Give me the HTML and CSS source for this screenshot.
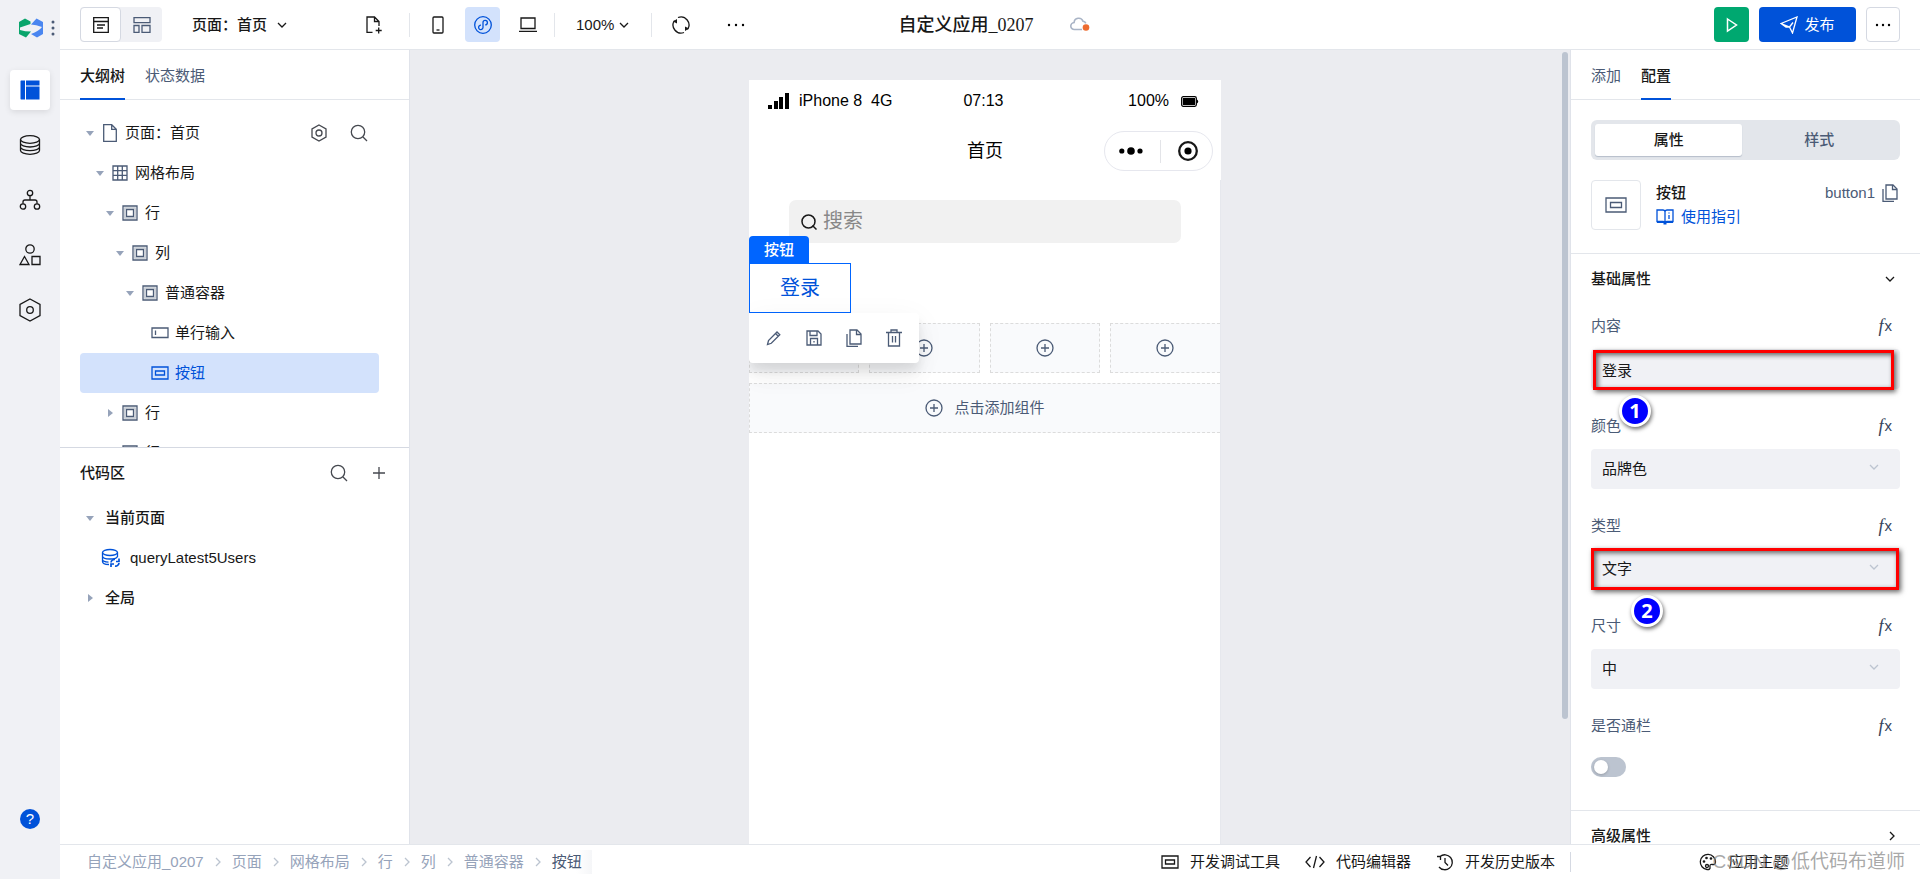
FILE: index.html
```html
<!DOCTYPE html>
<html lang="zh-CN">
<head>
<meta charset="utf-8">
<title>自定义应用_0207</title>
<link rel="stylesheet" href="styles.css">
</head>
<body>
<svg class="sprite" aria-hidden="true">
  <symbol id="i-box" viewBox="0 0 16 16"><path d="M1 1h14v14H1z"/><path d="M4.500 4.500h7v7h-7z"/><path stroke-opacity=".35" d="M2.800 2.800h10.400v10.400H2.800z"/></symbol>
  <symbol id="i-button" viewBox="0 0 18 14"><path d="M1 1h16v12H1z"/><path d="M4.500 5h9v4h-9z"/></symbol>
  <symbol id="i-plus-circle" viewBox="0 0 18 18"><circle cx="9" cy="9" r="8"/><path d="M9 5v8M5 9h8"/></symbol>
  <symbol id="i-search" viewBox="0 0 18 18"><circle cx="8" cy="8" r="6.700"/><path d="M13 13l4 4"/></symbol>
  <symbol id="i-copy" viewBox="0 0 18 18"><path d="M5 1h7l4 4v10H5z"/><path d="M11.500 1v4.500H16"/><path d="M2 5v12.500h11"/></symbol>
  <symbol id="i-down" viewBox="0 0 10 6"><path d="M1 1l4 4 4-4"/></symbol>
  <symbol id="i-right" viewBox="0 0 6 10"><path d="M1 1l4 4-4 4"/></symbol>
</svg>
<div class="app">
  <nav class="rail">
    <div class="rail-logo">
      <svg width="24" height="20" viewBox="0 0 24 20"><path fill="#0aa56c" d="M0 4L6 .5 11.500 3.500V6L1 9.500V12q5 1.500 11 1.500L7 19.500 0 16z"/><path fill="#4a86f0" d="M24 16L18 19.500 12 16q8-3 11-7-6-2.500-11-2.500L17.500 .5 24 4z"/></svg>
      <svg width="4" height="18" viewBox="0 0 4 18" fill="#4b5b76"><circle cx="2" cy="3" r="1.500"/><circle cx="2" cy="9" r="1.500"/><circle cx="2" cy="15" r="1.500"/></svg>
    </div>
    <button class="rail-item is-active" aria-label="编辑器"><svg width="20" height="20" viewBox="0 0 20 20"><path fill="#0052d9" d="M1 .5h4v19H1a1 1 0 0 1-.5-.5V1zM6 .5H19.500v5H6zM6 6.500H19.500v13H6z"/></svg></button>
    <button class="rail-item" aria-label="数据"><svg class="ico" width="22" height="22" viewBox="0 0 22 22"><ellipse cx="11" cy="5.500" rx="9.500" ry="3.800"/><path d="M1.500 5.500v11c0 2.200 4.300 3.800 9.500 3.800s9.500-1.600 9.500-3.800v-11M1.500 9.200c0 2.200 4.300 3.800 9.500 3.800s9.500-1.600 9.500-3.800M1.500 12.900c0 2.200 4.300 3.800 9.500 3.800s9.500-1.600 9.500-3.800"/></svg></button>
    <button class="rail-item" aria-label="流程"><svg class="ico" width="22" height="22" viewBox="0 0 22 22"><circle cx="11" cy="4" r="2.700"/><circle cx="4" cy="17.500" r="2.700"/><circle cx="18" cy="17.500" r="2.700"/><path d="M11 6.700V11M4 14.800V13q0-2 2-2h10q2 0 2 2v1.800"/></svg></button>
    <button class="rail-item" aria-label="组件"><svg class="ico" width="22" height="22" viewBox="0 0 22 22"><circle cx="11" cy="5" r="4.200"/><path d="M5.500 12.500L10 20.500H1zM13 12.500h8v8h-8z"/></svg></button>
    <button class="rail-item" aria-label="设置"><svg class="ico" width="22" height="24" viewBox="0 0 22 24"><path d="M11 1l10 5.500v11L11 23 1 17.500v-11z"/><circle cx="11" cy="12" r="3.300"/></svg></button>
    <button class="rail-help" aria-label="帮助">?</button>
  </nav>

  <div class="workspace">
    <header class="topbar">
      <div class="top-left">
        <div class="view-switch">
          <button class="view-btn is-active" aria-label="大纲视图"><svg class="ico" width="16" height="16" viewBox="0 0 16 16"><path d="M.7 .7h14.600v14.600H.7zM.7 4.500h14.600M4 8h8M4 11h6"/></svg></button>
          <button class="view-btn" aria-label="布局视图"><svg class="ico slate" width="18" height="16" viewBox="0 0 18 16"><path d="M1 .7h16v5H1zM1 8.500h5v6.800H1zM9 8.500h8v6.800H9z"/></svg></button>
        </div>
        <button class="page-select">页面：首页 <svg class="ico" width="10" height="6"><use href="#i-down"/></svg></button>
        <button class="tool tool-new" aria-label="新建页面"><svg class="ico" width="18" height="18" viewBox="0 0 18 18"><path d="M7.500 16.300H2V1h7.500L14 5.500V10M9.500 1v4.500H14M13.700 11.500v6M10.700 14.500h6"/></svg></button>
        <span class="divider"></span>
        <div class="devices">
          <button class="tool" aria-label="手机"><svg class="ico" width="12" height="18" viewBox="0 0 12 18"><rect x="1" y="1" width="10" height="16" rx="1"/><path d="M4.500 14h3"/></svg></button>
          <button class="tool is-active" aria-label="小程序"><svg class="ico blue" width="18" height="18" viewBox="0 0 18 18"><circle cx="9" cy="9" r="8.300"/><path d="M7 9.200a2.200 2.200 0 1 0 2 2.300v-5a2.200 2.200 0 1 1 2.200 2.300"/></svg></button>
          <button class="tool" aria-label="电脑"><svg class="ico" width="18" height="16" viewBox="0 0 18 16"><path d="M2 1h14v10.500H2zM0 14.300h18"/></svg></button>
        </div>
        <span class="divider"></span>
        <button class="zoom">100% <svg class="ico" width="10" height="6"><use href="#i-down"/></svg></button>
        <span class="divider"></span>
        <div class="actions">
          <button class="tool" aria-label="刷新"><svg class="ico" width="18" height="18" viewBox="0 0 18 18"><path d="M6 1.500a8 8 0 0 1 9.500 12M12 16.500A8 8 0 0 1 2.500 4.500"/><path fill="#181818" stroke="none" d="M1 5.500L5 3v4.500zM17 12.500l-4 2.500v-4.500z"/></svg></button>
          <button class="tool" aria-label="更多"><svg width="18" height="4" viewBox="0 0 18 4"><circle cx="2" cy="2" r="1.200"/><circle cx="9" cy="2" r="1.200"/><circle cx="16" cy="2" r="1.200"/></svg></button>
        </div>
      </div>
      <div class="top-title">
        <h1>自定义应用_0207</h1>
        <svg width="20" height="15" viewBox="0 0 20 15"><path fill="none" stroke="#a9b4c6" stroke-width="1.600" d="M12 12.500H4.500a3.500 3.500 0 0 1-.4-7A4.600 4.600 0 0 1 13 4.200a3.400 3.400 0 0 1 2.800 2.200"/><circle cx="16" cy="10.500" r="3.300" fill="#ed6b2f"/></svg>
      </div>
      <div class="top-right">
        <button class="run" aria-label="预览"><svg width="12" height="16" viewBox="0 0 12 16" fill="none" stroke="#fff" stroke-width="1.500"><path d="M1.500 2l9 6-9 6z"/></svg></button>
        <button class="publish"><svg width="18" height="18" viewBox="0 0 18 18" fill="none" stroke="#fff" stroke-width="1.300"><path d="M1 7.500L17 1l-4.500 16-3-6zM9.500 11L13 6.500M1 7.500L6 11l3.500 0"/></svg>发布</button>
        <button class="more" aria-label="更多"><svg width="18" height="4" viewBox="0 0 18 4"><circle cx="3" cy="2" r="1.200"/><circle cx="9" cy="2" r="1.200"/><circle cx="15" cy="2" r="1.200"/></svg></button>
      </div>
    </header>

    <main class="middle">
      <aside class="outline">
        <div class="tabs"><button class="tab is-active">大纲树</button><button class="tab">状态数据</button></div>
        <ul class="tree">
          <li class="row"><i class="caret"></i><span class="row-icon"><svg class="ico slate" width="14" height="18" viewBox="0 0 14 18"><path d="M.7 .7h8l4.600 4.600v12H.7zM8.700 .7v4.600h4.600"/></svg></span>页面：首页
            <span class="row-tools">
              <button class="icon-btn" aria-label="页面设置"><svg class="ico gray" width="16" height="18" viewBox="0 0 16 18"><path d="M8 1l7 4v8l-7 4-7-4V5z"/><circle cx="8" cy="9" r="3"/></svg></button>
              <button class="icon-btn" aria-label="搜索"><svg class="ico gray" width="18" height="18"><use href="#i-search"/></svg></button>
            </span></li>
          <li class="row level-1"><i class="caret"></i><span class="row-icon"><svg class="ico slate" width="16" height="16" viewBox="0 0 16 16"><path d="M1 1h14v14H1zM5.700 1v14M10.300 1v14M1 5.700h14M1 10.300h14"/></svg></span>网格布局</li>
          <li class="row level-2"><i class="caret"></i><span class="row-icon"><svg class="ico slate" width="16" height="16"><use href="#i-box"/></svg></span>行</li>
          <li class="row level-3"><i class="caret"></i><span class="row-icon"><svg class="ico slate" width="16" height="16"><use href="#i-box"/></svg></span>列</li>
          <li class="row level-4"><i class="caret"></i><span class="row-icon"><svg class="ico slate" width="16" height="16"><use href="#i-box"/></svg></span>普通容器</li>
          <li class="row level-5"><i class="caret is-empty"></i><span class="row-icon"><svg class="ico slate" width="18" height="12" viewBox="0 0 18 12"><path d="M1 1h16v9.500H1zM4.500 3.500v4.500"/></svg></span>单行输入</li>
          <li class="row level-5 is-selected"><i class="caret is-empty"></i><span class="row-icon"><svg class="ico blue" width="18" height="14"><use href="#i-button"/></svg></span>按钮</li>
          <li class="row level-2"><i class="caret is-closed"></i><span class="row-icon"><svg class="ico slate" width="16" height="16"><use href="#i-box"/></svg></span>行</li>
          <li class="row level-2"><i class="caret is-closed"></i><span class="row-icon"><svg class="ico slate" width="16" height="16"><use href="#i-box"/></svg></span>行</li>
        </ul>
        <section class="code">
          <div class="code-head"><h2>代码区</h2>
            <span class="code-tools">
            <button class="icon-btn" aria-label="搜索"><svg class="ico gray" width="18" height="18"><use href="#i-search"/></svg></button>
            <button class="icon-btn" aria-label="新增"><svg class="ico gray" width="12" height="12" viewBox="0 0 12 12"><path d="M6 0v12M0 6h12"/></svg></button>
            </span>
          </div>
          <ul class="code-list">
            <li class="row strong"><i class="caret"></i>当前页面</li>
            <li class="row query"><svg class="ico blue" width="20" height="20" viewBox="0 0 20 20"><ellipse cx="9" cy="4.500" rx="7.500" ry="3"/><path d="M1.500 4.500v9c0 1.800 3 3 6.500 3M16.500 4.500V9M1.500 8c0 1.800 3.400 3 7.500 3s7.500-1.200 7.500-3M1.500 11.500c0 1.500 3 2.500 6 2.700"/><path stroke-width="1.700" d="M10 14.500a3.500 3.500 0 0 1 4-3M18 15a3.500 3.500 0 0 1-4 3M18 10.500v3h-3M10 19v-3h3"/></svg>queryLatest5Users</li>
            <li class="row strong"><i class="caret is-closed"></i>全局</li>
          </ul>
        </section>
      </aside>

      <section class="canvas">
        <div class="phone">
          <div class="status">
            <span class="carrier"><svg width="22" height="16" viewBox="0 0 22 16"><path d="M0 12h4v4H0zM6 8h4v8H6zM11 4h4v12h-4zM17 0h4v16h-4z"/></svg>iPhone 8&nbsp; 4G</span>
            <span>07:13</span>
            <span class="power">100% <svg width="18" height="11" viewBox="0 0 18 11"><rect x=".7" y=".7" width="14.600" height="9.600" rx="1.500" fill="none" stroke="#000" stroke-width="1.300"/><path d="M2 2h12v7H2zM16 3.500q2.500 2 0 4z"/></svg></span>
          </div>
          <div class="navbar">
            <span class="nav-title">首页</span>
            <span class="capsule"><svg width="24" height="8" viewBox="0 0 24 8"><circle cx="2.800" cy="4" r="2.600"/><circle cx="12" cy="4" r="3.800"/><circle cx="21" cy="4" r="2.600"/></svg><span class="capsule-line"></span><svg width="20" height="20" viewBox="0 0 20 20"><circle cx="10" cy="10" r="8.800" fill="none" stroke="#181818" stroke-width="2.300"/><circle cx="10" cy="10" r="3.600"/></svg></span>
          </div>
          <div class="page">
            <label class="search"><svg width="16" height="16" viewBox="0 0 16 16" fill="none" stroke="#181818" stroke-width="1.500"><circle cx="7.500" cy="7.500" r="6.500"/><path d="M11.500 11.500l4 4"/></svg><input type="text" placeholder="搜索" aria-label="搜索"></label>
            <div class="selection">
              <span class="tag">按钮</span>
              <button class="login">登录</button>
              <div class="float-bar">
                <button class="icon-btn" aria-label="编辑"><svg class="ico slate" width="16" height="16" viewBox="0 0 16 16"><path d="M1.500 14.500l1-4L11 2l2.800 2.800-8.500 8.500zM9.500 3.500l2.800 2.800"/></svg></button>
                <button class="icon-btn" aria-label="保存"><svg class="ico slate" width="16" height="16" viewBox="0 0 16 16"><path d="M1 1h11l3 3v11H1zM4 1v4.500h7V1M4.500 15V8.500h7V15M8 11v1.500"/></svg></button>
                <button class="icon-btn" aria-label="复制"><svg class="ico slate" width="18" height="18"><use href="#i-copy"/></svg></button>
                <button class="icon-btn" aria-label="删除"><svg class="ico slate" width="16" height="18" viewBox="0 0 16 18"><path d="M0 3.500h16M2.500 3.500V17h11V3.500M5 3.500V1h6v2.500M6.500 7v6.500M9.500 7v6.500"/></svg></button>
              </div>
            </div>
            <div class="slots">
              <button class="slot" aria-label="添加组件"><svg class="ico slate" width="18" height="18"><use href="#i-plus-circle"/></svg></button>
              <button class="slot" aria-label="添加组件"><svg class="ico slate" width="18" height="18"><use href="#i-plus-circle"/></svg></button>
              <button class="slot" aria-label="添加组件"><svg class="ico slate" width="18" height="18"><use href="#i-plus-circle"/></svg></button>
              <button class="slot slot-last" aria-label="添加组件"><svg class="ico slate" width="18" height="18"><use href="#i-plus-circle"/></svg></button>
            </div>
            <button class="slot slot-wide"><svg class="ico slate" width="18" height="18"><use href="#i-plus-circle"/></svg>点击添加组件</button>
          </div>
        </div>
        <div class="scrollbar"></div>
      </section>

      <aside class="config">
        <div class="tabs"><button class="tab">添加</button><button class="tab is-active">配置</button></div>
        <div class="segment"><button class="seg is-active">属性</button><button class="seg">样式</button></div>
        <div class="component">
          <span class="thumb"><svg class="ico slate" width="22" height="16" viewBox="0 0 22 16"><path d="M1 1h20v14H1zM5.500 5.500h11v5h-11z"/></svg></span>
          <div class="component-text">
            <strong>按钮</strong>
            <a class="guide" href="#"><svg class="ico blue" width="18" height="16" viewBox="0 0 18 16"><path d="M9 2.500V14M9 2.500Q8.500 1 7 1H1v11.500h6.500Q9 13 9 14.500M9 2.500Q9.500 1 11 1h6v11.500h-6.500Q9 13 9 14.500M13 6v4M13 3.500v1"/><path stroke-width="2" d="M1 13h16M7.500 14.500h3"/></svg>使用指引</a>
          </div>
          <span class="component-id">button1 <button class="icon-btn" aria-label="复制"><svg class="ico slate" width="18" height="18"><use href="#i-copy"/></svg></button></span>
        </div>
        <button class="section-head">基础属性 <svg class="ico" width="10" height="6"><use href="#i-down"/></svg></button>
        <div class="fields">
          <div class="field">
            <div class="field-head"><label for="f-text">内容</label><button class="fx"><i>f</i>x</button></div>
            <div class="control"><input id="f-text" type="text" value="登录"><span class="mark mark-text"></span></div>
            <span class="badge badge-1">1</span>
          </div>
          <div class="field">
            <div class="field-head"><label for="f-color">颜色</label><button class="fx"><i>f</i>x</button></div>
            <div class="control"><select id="f-color"><option>品牌色</option></select><svg class="ico arrow" width="10" height="6"><use href="#i-down"/></svg></div>
          </div>
          <div class="field">
            <div class="field-head"><label for="f-type">类型</label><button class="fx"><i>f</i>x</button></div>
            <div class="control"><select id="f-type"><option>文字</option></select><svg class="ico arrow" width="10" height="6"><use href="#i-down"/></svg><span class="mark"></span></div>
            <span class="badge badge-2">2</span>
          </div>
          <div class="field">
            <div class="field-head"><label for="f-size">尺寸</label><button class="fx"><i>f</i>x</button></div>
            <div class="control"><select id="f-size"><option>中</option></select><svg class="ico arrow" width="10" height="6"><use href="#i-down"/></svg></div>
          </div>
          <div class="field field-switch">
            <div class="field-head"><label for="f-block">是否通栏</label><button class="fx"><i>f</i>x</button></div>
            <input id="f-block" class="switch" type="checkbox">
          </div>
        </div>
        <button class="section-head">高级属性 <svg class="ico" width="6" height="10"><use href="#i-right"/></svg></button>
      </aside>
    </main>

    <footer class="bottombar">
      <nav class="crumbs">
        <a href="#">自定义应用_0207</a><svg class="ico" width="6" height="10"><use href="#i-right"/></svg>
        <a href="#">页面</a><svg class="ico" width="6" height="10"><use href="#i-right"/></svg>
        <a href="#">网格布局</a><svg class="ico" width="6" height="10"><use href="#i-right"/></svg>
        <a href="#">行</a><svg class="ico" width="6" height="10"><use href="#i-right"/></svg>
        <a href="#">列</a><svg class="ico" width="6" height="10"><use href="#i-right"/></svg>
        <a href="#">普通容器</a><svg class="ico" width="6" height="10"><use href="#i-right"/></svg>
        <a class="current" href="#">按钮</a>
      </nav>
      <div class="dev-tools">
        <button class="dev"><svg class="ico" width="18" height="14"><use href="#i-button"/></svg>开发调试工具</button>
        <button class="dev"><svg class="ico" width="20" height="14" viewBox="0 0 20 14"><path d="M5.500 2L1 7l4.500 5M14.500 2L19 7l-4.500 5M11.500 1l-3 12"/></svg>代码编辑器</button>
        <button class="dev"><svg class="ico" width="18" height="18" viewBox="0 0 18 18"><path d="M4 3.500A7.500 7.500 0 1 1 3 14M1 3.500h3.500V7M9 5v4.500l3 3"/></svg>开发历史版本</button>
      </div>
      <div class="theme">
        <button class="dev"><svg class="ico" width="18" height="18" viewBox="0 0 18 18"><path d="M8 16.500A7.600 7.600 0 1 1 16.500 9c0 2-1.500 2.800-3 2.500-2-.4-3 .5-2.500 2.500s-1 2.800-3 2.500z"/><circle cx="5" cy="8.500" r=".7"/><circle cx="7.500" cy="5" r=".7"/><circle cx="12" cy="5.500" r=".7"/><circle cx="8" cy="13" r="1.500"/></svg>应用主题</button>
        <span class="watermark">CSDN @低代码布道师</span>
      </div>
    </footer>
  </div>
</div>
</body>
</html>
```

FILE: styles.css
```css
* { box-sizing: border-box; }
body, h1, h2, ul { margin: 0; padding: 0; }
body {
  font: 15px/20px "Liberation Sans", "Noto Sans CJK SC", sans-serif;
  color: #181818;
}
button, input, select { font: inherit; color: inherit; }
button {
  display: flex;
  align-items: center;
  justify-content: center;
  padding: 0;
  border: 0;
  background: none;
  cursor: pointer;
  white-space: nowrap;
}
a { color: inherit; text-decoration: none; }
svg { display: block; flex: none; }
ul { list-style: none; }

.sprite { position: absolute; width: 0; height: 0; }
.ico { fill: none; stroke: #181818; stroke-width: 1.3; }
.ico.slate { stroke: #4b5b76; }
.ico.gray { stroke: #45484f; }
.ico.blue { stroke: #0052d9; }

.app { display: flex; height: 100vh; overflow: hidden; background: #fff; }
.workspace { flex: 1; min-width: 0; display: flex; flex-direction: column; }

/* Left rail */
.rail {
  display: flex;
  flex-direction: column;
  align-items: center;
  gap: 15px;
  width: 60px;
  padding: 18px 0 50px;
  background: #f0f1f5;
}
.rail-logo { display: flex; align-items: center; gap: 8px; margin: 0 0 17px 14px; }
.rail-item { width: 40px; height: 40px; border-radius: 4px; }
.rail-item.is-active { background: #fff; box-shadow: 0 2px 6px #0000001a; }
.rail-help {
  width: 20px;
  height: 20px;
  margin-top: auto;
  border-radius: 50%;
  background: #0052d9;
  color: #fff;
}

/* Top bar */
.topbar {
  display: flex;
  align-items: center;
  height: 50px;
  padding: 0 20px;
  border-bottom: 1px solid #e3e6eb;
}
.top-left { flex: 1; display: flex; align-items: center; }
.top-right { flex: 1; display: flex; justify-content: flex-end; gap: 10px; }
.top-title { display: flex; align-items: center; gap: 36px; padding-left: 8px; }
.top-title h1 { font: 500 18px/24px "Liberation Serif", "Noto Sans CJK SC", serif; }
.view-switch { display: flex; height: 35px; border-radius: 4px; background: #f0f1f5; }
.view-btn { width: 41px; }
.view-btn.is-active { border: 1px solid #d5d9e2; border-radius: 4px; background: #fff; }
.page-select { gap: 10px; margin-left: 30px; font-weight: 500; }
.tool { width: 35px; height: 35px; border-radius: 4px; }
.tool.is-active { background: #d3e2fc; }
.tool-new { margin: 0 18px 0 69px; }
.divider { width: 1px; height: 24px; background: #e3e6eb; }
.devices { display: flex; gap: 10px; margin: 0 9px 0 10px; }
.zoom { gap: 5px; margin: 0 22px 0 21px; }
.actions { display: flex; gap: 20px; margin-left: 11px; }
.run, .publish { height: 35px; border-radius: 4px; background: #0052d9; color: #fff; }
.run { width: 35px; background: #00a870; }
.publish { gap: 6px; width: 97px; }
.more { width: 34px; height: 35px; border: 1px solid #d5d9e2; border-radius: 4px; }

.middle { flex: 1; min-height: 0; display: flex; }

/* Tabs */
.tabs { display: flex; flex: none; gap: 20px; height: 50px; padding: 0 20px; border-bottom: 1px solid #e3e6eb; }
.tab { height: 50px; padding-top: 3px; border-bottom: 2px solid transparent; color: #4b5b76; }
.tab.is-active { border-color: #0052d9; color: #181818; font-weight: 500; }

/* Outline */
.outline { display: flex; flex-direction: column; width: 350px; border-right: 1px solid #e0e3ea; }
.tree { flex: 0 1 347px; padding: 13px 30px 0 20px; overflow: hidden; }
.row { display: flex; align-items: center; height: 40px; border-radius: 4px; }
.level-1 { padding-left: 10px; }
.level-2 { padding-left: 20px; }
.level-3 { padding-left: 30px; }
.level-4 { padding-left: 40px; }
.level-5 { padding-left: 50px; }
.is-selected { background: #d3e2fc; color: #0052d9; }
.caret { flex: none; display: flex; justify-content: center; width: 20px; }
.caret::before { content: ""; border: 4px solid transparent; border-top: 5px solid #96a3ba; border-bottom: 0; }
.caret.is-closed::before { border: 4px solid transparent; border-left: 5px solid #96a3ba; border-right: 0; }
.caret.is-empty::before { display: none; }
.row-icon { display: flex; justify-content: center; width: 20px; margin-right: 5px; }
.row-tools { display: flex; gap: 20px; margin: 0 10px 0 auto; }
.icon-btn { width: 20px; height: 20px; }
.code { flex: 1; border-top: 1px solid #d5d9e2; }
.code-head { display: flex; align-items: center; justify-content: space-between; height: 50px; padding: 0 20px; }
.code-head h2 { font-size: 15px; font-weight: 500; }
.code-tools { display: flex; gap: 20px; }
.code-list { padding: 0 20px; }
.strong { gap: 5px; font-weight: 500; }
.query { gap: 9px; padding-left: 21px; }

/* Canvas */
.canvas { flex: 1; min-width: 0; display: flex; position: relative; justify-content: center; padding: 30px 10px 0 0; background: #ebecf0; }
.phone { display: flex; flex-direction: column; width: 472px; background: #fff; color: #000; }
.status { display: grid; grid-template-columns: 1fr auto 1fr; align-items: center; height: 42px; padding: 0 22px 0 19px; font-size: 16px; }
.carrier { display: flex; align-items: center; gap: 9px; }
.power { display: flex; align-items: center; justify-content: flex-end; gap: 12px; }
.navbar { display: grid; grid-template-columns: 1fr auto 1fr; align-items: center; height: 58px; padding-right: 8px; }
.nav-title { grid-column: 2; padding-left: 8px; font-size: 18px; }
.capsule { display: flex; justify-self: end; align-items: center; justify-content: space-between; width: 109px; height: 40px; padding: 0 14px; border: 1px solid #e6e7ee; border-radius: 20px; }
.capsule-line { width: 1px; height: 23px; background: #e3e4e8; }
.page { flex: 1; padding-top: 20px; overflow: hidden; border-right: 1px solid #e6e8ed; }
.search { display: flex; align-items: center; gap: 6px; height: 43px; margin: 0 39px 0 40px; padding: 0 12px; border-radius: 7px; background: #f1f1f1; }
.search input { flex: 1; min-width: 0; height: 40px; padding: 0; border: 0; background: none; font-size: 20px; }
.search input::placeholder { color: #888; opacity: 1; }
.selection { position: relative; width: 102px; margin-top: 20px; }
.tag { position: absolute; bottom: 100%; left: 0; width: 60px; padding: 4px 0 3px; border-radius: 4px 4px 0 0; background: #0065ff; color: #fff; font-weight: 500; text-align: center; }
.login { width: 100%; height: 50px; border: 1px solid #0065ff; color: #0052d9; font-size: 20px; }
.float-bar { position: absolute; top: 100%; left: 0; display: flex; align-items: center; gap: 20px; height: 50px; padding: 0 15px; border-radius: 4px; background: #fff; box-shadow: 0 6px 30px #0000000d, 0 16px 24px #0000000a, 0 8px 10px #00000014; }
.slots { display: grid; grid-template-columns: repeat(4, 1fr); gap: 10px; margin-top: 10px; }
.slot { height: 50px; border: 1px dashed #dcdcdc; background: #f9fafc; }
.slot-last { border-right: 0; }
.slot-wide { gap: 11px; width: 100%; margin-top: 10px; border-right: 0; color: #4b5b76; }
.scrollbar { position: absolute; top: 2px; right: 2px; width: 6px; height: 84%; border-radius: 3px; background: #bcc4d0; }

/* Config */
.config { display: flex; flex-direction: column; width: 350px; border-left: 1px solid #e0e3ea; overflow: hidden; }
.segment { display: flex; flex: none; height: 40px; margin: 20px 20px 0; padding: 4px; border-radius: 6px; background: #e3e6eb; }
.seg { flex: 1; color: #4b5b76; font-weight: 500; }
.seg.is-active { flex: 0 0 49%; border-radius: 3px; background: #fff; box-shadow: 0 1px 1px #b5bdca; color: #181818; }
.component { display: flex; flex: none; gap: 15px; margin: 20px 20px 23px; }
.thumb { display: flex; align-items: center; justify-content: center; width: 50px; height: 50px; border: 1px solid #e3e6eb; border-radius: 4px; }
.component-text { display: flex; flex-direction: column; gap: 4px; padding-top: 3px; }
.component-text strong { font-weight: 500; }
.guide { display: flex; align-items: center; gap: 7px; color: #0052d9; }
.component-id { display: flex; gap: 5px; margin-left: auto; padding-top: 3px; color: #4b5b76; }
.section-head { flex: none; justify-content: space-between; height: 51px; padding: 0 25px 0 20px; border-top: 1px solid #e3e6eb; font-weight: 500; }
.fields { flex: none; padding: 9px 20px 9px; }
.field { position: relative; margin-bottom: 24px; }
.field-head { display: flex; align-items: center; justify-content: space-between; height: 26px; margin-bottom: 10px; padding-right: 8px; color: #4b5b76; }
.fx { gap: 1px; font-size: 15px; color: #35435c; }
.fx i { font: italic 18px/20px "Liberation Serif", serif; }
.control { position: relative; }
.control input, .control select { display: block; width: 100%; height: 40px; padding: 0 11px; border: 0; border-radius: 4px; background: #f0f1f5; appearance: none; }
.arrow { position: absolute; top: 15px; right: 21px; stroke: #bcc4d0; }
.field-switch .field-head { margin-bottom: 18px; }
.switch { display: block; width: 35px; height: 20px; margin: 0; padding: 3px; border-radius: 10px; background: #bcc4d0; appearance: none; }
.switch::before { content: ""; display: block; width: 14px; height: 14px; border-radius: 50%; background: #fff; box-shadow: 0 1px 3px #0003; }
.mark { position: absolute; inset: -1px 1px -1px 0; border: 3px solid #f00; box-shadow: 2px 2px 5px #0009, inset 2px 2px 5px #0009; pointer-events: none; }
.mark-text { inset: 1px 6px -1px 2px; }
.badge { position: absolute; top: 82px; left: 28px; display: flex; align-items: center; justify-content: center; width: 32px; height: 32px; border: 3px solid #fff; border-radius: 50%; background: #00f; box-shadow: 1px 2px 4px #0009; color: #fff; font: bold 20px/26px "Open Sans", "Noto Sans", sans-serif; z-index: 1; }
.badge-2 { left: 40px; }

/* Bottom bar */
.bottombar { display: flex; align-items: center; height: 35px; flex: none; border-top: 1px solid #e3e6eb; }
.crumbs { flex: 1; display: flex; align-items: center; gap: 11px; padding-left: 27px; color: #96a3ba; white-space: nowrap; }
.crumbs .ico { stroke: #bcc4d0; }
.crumbs .current { color: #4b5b76; padding: 2px 10px 2px 0; background: linear-gradient(90deg, #fff 60%, #f5f6f8); }
.dev-tools { display: flex; gap: 25px; padding-right: 15px; }
.dev { gap: 11px; }
.theme { position: relative; display: flex; justify-content: center; width: 350px; padding-right: 3px; border-left: 1px solid #d5d9e2; }
.watermark { position: absolute; right: 15px; color: #888b; font-size: 19px; white-space: nowrap; }
```
